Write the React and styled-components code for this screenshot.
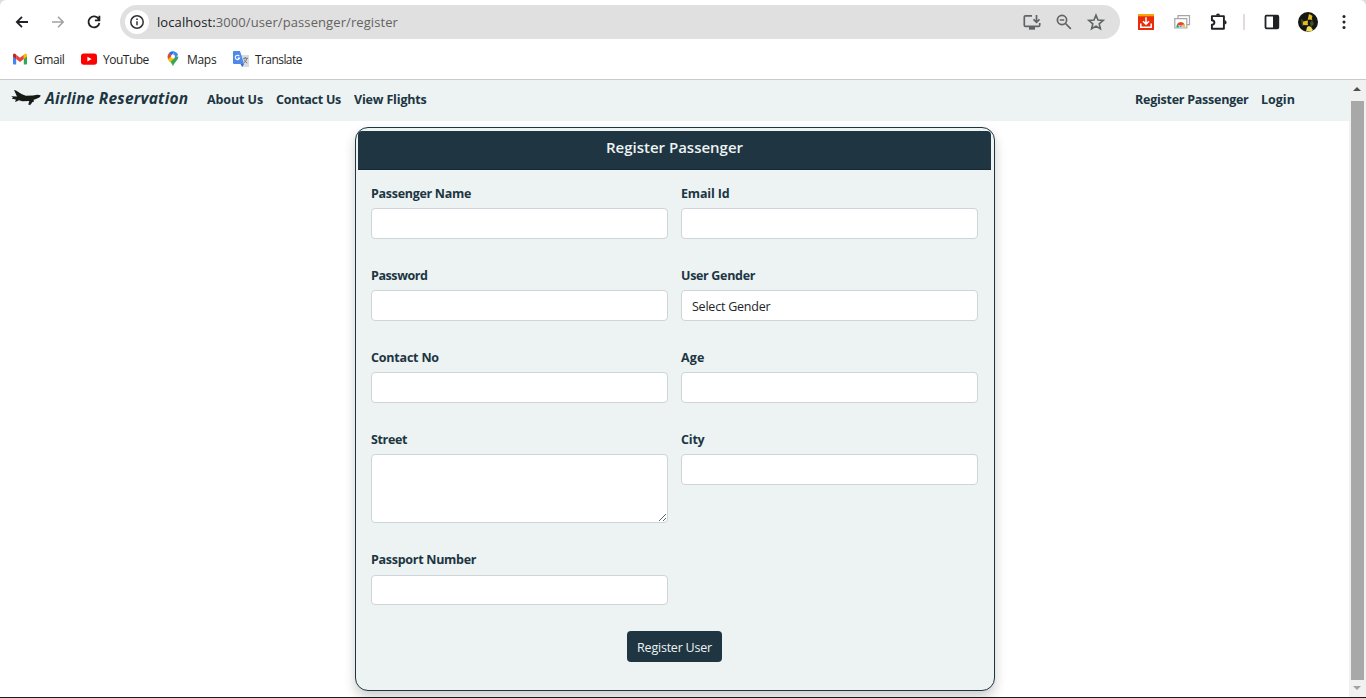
import React from 'react';
import styled, { createGlobalStyle } from 'styled-components';

const navy = '#203542';
const mist = '#ecf3f2';

const GlobalStyle = createGlobalStyle`
  * { box-sizing: border-box; }
  html, body { margin: 0; overflow: hidden; background: #fff; }
  body, input, textarea, button { font-family: "Open Sans", "Noto Sans", sans-serif; }
`;

const Window = styled.div`
  display: flex;
  flex-direction: column;
  width: 1366px;
  height: 698px;
  overflow: hidden;
  background: #e3dada;
  border-bottom: 1px solid #1b1b1b;
`;

const Browser = styled.header`
  height: 80px;
  flex: none;
  background: #fff;
  border-bottom: 1px solid #c8cacc;
  border-radius: 6px 6px 0 0;
`;

const Toolbar = styled.div`
  display: flex;
  align-items: center;
  height: 44px;
  padding: 0 12px;
`;

const NavButtons = styled.div`
  display: flex;
  gap: 16px;
  width: 108px;
`;

const Icon = styled.svg`
  display: block;
  flex: none;
  width: ${p => p.$w || 20}px;
  height: ${p => p.$h || p.$w || 20}px;
  fill: none;
  stroke: ${p => p.$color || 'none'};
  stroke-width: ${p => p.$stroke || 1.8};
`;

const AddressBar = styled.div`
  display: flex;
  align-items: center;
  width: 1000px;
  height: 34px;
  padding: 0 14px 0 5px;
  border-radius: 17px;
  background: #e0e0e0;
`;

const SiteInfo = styled.div`
  display: grid;
  place-items: center;
  width: 24px;
  height: 24px;
  border-radius: 50%;
  background: #fff;
`;

const Url = styled.div`
  flex: 1;
  margin-left: 8px;
  font-size: 13px;
  line-height: 20px;
  letter-spacing: 0.09px;
  color: #636363;
  span { color: #202124; }
`;

const AddressActions = styled.div`
  display: flex;
  align-items: center;
  gap: 12px;
`;

const Extensions = styled.div`
  display: flex;
  align-items: center;
  margin-left: 16px;
  gap: 16px;
`;

const Divider = styled.div`
  width: 2px;
  height: 16px;
  margin: 0 1px 0 -1px;
  background: #e3dada;
`;

const Bookmarks = styled.nav`
  display: flex;
  align-items: center;
  height: 30px;
  padding-left: 12px;
`;

const Bookmark = styled.a`
  display: flex;
  align-items: center;
  gap: 6px;
  width: ${p => p.$width}px;
  font-size: 12px;
  line-height: 16px;
  letter-spacing: ${p => p.$ls || 0}px;
  color: #252525;
  white-space: nowrap;
`;

const BookmarkName = styled.span`
  padding-top: 2px;
`;

const Viewport = styled.div`
  display: flex;
  flex: 1;
  min-height: 0;
  background: #fff;
`;

const Page = styled.div`
  flex: 1;
  min-width: 0;
  overflow: hidden;
`;

const SiteNav = styled.nav`
  display: flex;
  align-items: center;
  height: 41px;
  padding: 0 54px 3px 11px;
  background: ${mist};
`;

const Brand = styled.div`
  display: flex;
  align-items: center;
  gap: 4px;
  width: 196px;
  padding-bottom: 2px;
  font-size: 15.5px;
  font-weight: 700;
  font-style: italic;
  letter-spacing: 0.22px;
  color: ${navy};
  white-space: nowrap;
`;

const NavLink = styled.a`
  width: ${p => p.$width}px;
  margin-left: ${p => (p.$end ? 'auto' : 0)};
  font-size: 12.5px;
  font-weight: 700;
  letter-spacing: ${p => p.$ls || 0}px;
  color: ${navy};
  white-space: nowrap;
`;

const Card = styled.main`
  width: 640px;
  height: 564px;
  margin: 6px 0 0 355px;
  padding: 3px 3px 0 2px;
  border: 1px solid ${navy};
  border-radius: 13px;
  background: ${mist};
  box-shadow: 0 6px 12px rgba(0, 0, 0, 0.2);
`;

const CardTitle = styled.h1`
  height: 39px;
  margin: 0;
  padding-top: 6px;
  border-bottom: 1px solid #182a36;
  border-radius: 4px 4px 0 0;
  background: ${navy};
  color: ${mist};
  font-size: 15px;
  line-height: 21px;
  font-weight: 600;
  text-align: center;
`;

const Form = styled.form`
  display: grid;
  grid-template-columns: 297px 297px;
  grid-template-rows: 82px 82px 82px 120px 76px;
  column-gap: 13px;
  padding: 14px 0 0 13px;
`;

const Field = styled.label`
  display: block;
`;

const Label = styled.span`
  display: block;
  height: ${p => p.$h || 24}px;
  padding-top: 1px;
  font-size: 12.5px;
  line-height: 18px;
  font-weight: 700;
  letter-spacing: ${p => p.$ls || 0}px;
  color: ${navy};
`;

const Input = styled.input`
  display: block;
  width: 100%;
  height: ${p => p.$h || 31}px;
  border: 1px solid #ced4da;
  border-radius: 4px;
  background: #fff;
  outline: 0;
`;

const TextArea = styled.textarea`
  display: block;
  width: 100%;
  height: 69px;
  border: 1px solid #ced4da;
  border-radius: 4px;
  background: #fff;
  resize: vertical;
`;

const Select = styled.div`
  height: 31px;
  padding: 1px 0 0 10px;
  border: 1px solid #ced4da;
  border-radius: 4px;
  background: #fff;
  font-size: 12.5px;
  line-height: 30px;
  letter-spacing: -0.23px;
  color: #212529;
`;

const Submit = styled.button`
  grid-column: 1 / -1;
  display: block;
  width: 95px;
  height: 31px;
  margin: 5px 0 0 256px;
  padding: 1px 0 0;
  border: 0;
  border-radius: 4px;
  background: ${navy};
  color: ${mist};
  font-size: 12.5px;
  letter-spacing: -0.22px;
  white-space: nowrap;
`;

const Scrollbar = styled.div`
  display: flex;
  flex-direction: column;
  align-items: center;
  justify-content: space-between;
  width: 17px;
  padding: 6px 1px 6px 0;
  background: #f1f1f1;
`;

const Thumb = styled.div`
  flex: 1;
  width: 13px;
  margin: 10px 0 6px 1px;
  background: #a8a8a8;
`;

const fields = [
  { name: 'Passenger Name', ls: -0.3 },
  { name: 'Email Id', ls: -0.15 },
  { name: 'Password', ls: -0.42 },
  { name: 'User Gender', ls: -0.32, kind: 'select' },
  { name: 'Contact No', ls: -0.2 },
  { name: 'Age', ls: 0.1 },
  { name: 'Street', ls: -0.35, kind: 'area' },
  { name: 'City', ls: -0.2 },
  { name: 'Passport Number', ls: -0.28, labelHeight: 25, height: 30 },
];

function Control({ kind, height }) {
  if (kind === 'select') return <Select>Select Gender</Select>;
  if (kind === 'area') return <TextArea />;
  return <Input $h={height} />;
}

export default function App() {
  return (
    <>
      <GlobalStyle />
      <Window>
        <Browser>
          <Toolbar>
            <NavButtons>
              <Icon viewBox="0 0 20 20" $color="#202124"><path d="M16 10H5M10 4.8 4.8 10l5.2 5.2" /></Icon>
              <Icon viewBox="0 0 20 20" $color="#a0a2a4" $stroke={1.6}><path d="M4 10h11M10 4.8l5.2 5.2-5.2 5.2" /></Icon>
              <Icon viewBox="0 0 20 20" $color="#202124"><path d="M14.8 7.2A5.5 5.5 0 1 0 15.4 11M15.4 3.8v4.5h-4.5" /></Icon>
            </NavButtons>
            <AddressBar>
              <SiteInfo>
                <Icon viewBox="0 0 16 16" $w={16} $color="#303134" $stroke={1.5}><circle cx="8" cy="8" r="6.2" /><path d="M8 7.2v4M8 4.4v1.6" /></Icon>
              </SiteInfo>
              <Url><span>localhost:</span>3000/user/passenger/register</Url>
              <AddressActions>
                <Icon viewBox="0 0 20 20" $color="#626365" $stroke={1.7}><path d="M10 3.8H3.5Q2.3 3.8 2.3 5v8.2q0 1.2 1.2 1.2h13q1.2 0 1.2-1.2V11M14.5 3v7M11.5 7.3l3 3 3-3" /><path d="M7 16.2h6" strokeWidth="3" /></Icon>
                <Icon viewBox="0 0 20 20" $color="#626365" $stroke={1.7}><circle cx="8" cy="8" r="4.6" /><path d="m11.5 11.5 5.3 5.3M5.8 8h4.4" /></Icon>
                <Icon viewBox="0 0 20 20" $color="#626365" $stroke={1.6}><path d="m10 3.2 2 4.8 5.2.4-4 3.4 1.2 5L10 14.1l-4.4 2.7 1.2-5-4-3.4L8 8z" /></Icon>
              </AddressActions>
            </AddressBar>
            <Extensions>
              <Icon viewBox="0 0 20 20"><path fill="#e92c0b" d="M2 2h16v16H2z" /><path fill="#fca108" d="M2 2h16v2.3H2z" /><path stroke="#fff" strokeWidth="1.5" d="M10 5.3v7M7 9.3l3 3 3-3M4.8 11.5v3.8h10.4v-3.8" /></Icon>
              <Icon viewBox="0 0 20 20">
                <path fill="#fff" stroke="#a6a6a6" strokeWidth="1.2" d="M6 3.6h11.5v9H6z" />
                <path fill="#fff" stroke="#a6a6a6" strokeWidth="1.2" d="M2.8 6.6h12v9.4h-12z" />
                <path fill="#df4434" d="M4.8 12.6a4.3 4.3 0 0 1 8 0L8.8 14z" /><path fill="#22a45b" d="M4.5 15.6q-.3-1.9.7-3.5L8 15.6z" /><path fill="#f6c338" d="M9.6 15.6 10.5 12.4h2.2q.8 1.6.5 3.2z" /><path fill="#4386ee" stroke="#fff" strokeWidth=".5" d="M6.9 15.6a1.9 1.9 0 0 1 3.8 0z" />
              </Icon>
              <Icon viewBox="0 0 20 20" $color="#202124" $stroke={1.9}>
                <path strokeLinejoin="round" d="M3.9 4.1h12v12.6h-12v-3.9q2.5-.3 2.5-2.3T3.9 8.2z" /><path fill="#202124" stroke="none" d="M8 3.5a2 2 0 0 1 4 0zM16.5 8.3a2.1 2.1 0 0 1 0 4.2z" />
              </Icon>
              <Divider />
              <Icon viewBox="0 0 20 20" $color="#202124" $stroke={1.8}><rect x="3.5" y="3.7" width="12.8" height="12.6" rx="1" /><path fill="#202124" stroke="none" d="M11 4h6v12h-6z" /></Icon>
              <Icon viewBox="0 0 20 20">
                <circle cx="10" cy="10" r="10" fill="#151713" /><path fill="#435129" d="m3 7 3 2 1 4-3 1zM14 8l2 4-3 3-1-4z" /><path fill="#e6bc22" d="m11 2 2 1 1.5 1-.7 2 .5 2-3-.4-1.5.5.5-3zM5 10l2-1 3-.5-.3 3 .5 1.5-2.5.2-2.7-.4z" /><path fill="#f0dc62" d="m9 15 2-1 2 1 2 3-2 1.4H8z" />
              </Icon>
              <Icon viewBox="0 0 20 20"><g fill="#202124"><circle cx="10" cy="4.5" r="1.5" /><circle cx="10" cy="10" r="1.5" /><circle cx="10" cy="15.5" r="1.5" /></g></Icon>
            </Extensions>
          </Toolbar>
          <Bookmarks>
            <Bookmark $width={69} $ls={-0.45}>
              <Icon viewBox="0 0 16 16" $w={16}><path fill="#4285f4" d="M1 4.5 4.2 7v6.5H2q-1 0-1-1z" /><path fill="#34a853" d="M11.8 7 15 4.5v8q0 1-1 1h-2.2z" /><path fill="#ea4335" d="M4.2 3.8 8 6.7l3.8-2.9V8L8 11 4.2 8z" /><path fill="#c5221f" d="M1 4.2q0-2.4 2-1.4l1.2 1V8L1 5.6z" /><path fill="#fbbc04" d="M15 4.2q0-2.4-2-1.4l-1.2 1V8L15 5.6z" /></Icon>
              <BookmarkName>Gmail</BookmarkName>
            </Bookmark>
            <Bookmark $width={84} $ls={-0.5}>
              <Icon viewBox="0 0 16 16" $w={16}><rect y="2.4" width="16" height="11.4" rx="2.8" fill="#f00" /><path fill="#fff" d="m6.4 5.7 4.2 2.4-4.2 2.4z" /></Icon>
              <BookmarkName>YouTube</BookmarkName>
            </Bookmark>
            <Bookmark $width={68} $ls={-0.3}>
              <Icon viewBox="0 0 16 16" $w={16}><path fill="#34a853" d="M2.7 6C2.7 10 7 11 8 15.5 9 11 13.3 9.6 13.3 5.4z" /><path fill="#fbbc04" d="M3 7.5 7 3l3 4-5 4.3Q3.4 9.6 3 7.5z" /><path fill="#ea4335" d="m3.9 2.1 3.2 2.7L3 8Q2 4.5 3.9 2.1z" /><path fill="#1a73e8" d="M3.9 2.1Q6-.3 9.6.6L6.4 4.4z" /><path fill="#4285f4" d="M9.6.6q2.6.8 3.5 3.2L9.5 8 8 3z" /><circle cx="8" cy="5.6" r="2" fill="#fff" /></Icon>
              <BookmarkName>Maps</BookmarkName>
            </Bookmark>
            <Bookmark $width={90} $ls={-0.57}>
              <Icon viewBox="0 0 16 16" $w={16}><path fill="#d9dcdf" d="M6 4h10v12H9z" /><path fill="#4f89eb" d="M1 0h6l4 13H1q-1 0-1-1V1q0-1 1-1z" /><path fill="#3367d6" d="M7.5 13H11l-1.8 3z" /><path stroke="#fff" strokeWidth="1.1" d="M6.3 5.1a2.2 2.2 0 1 0 .3 2H4.7" /><path stroke="#69747c" strokeWidth=".9" d="M10 7.3h5M12.3 6v1.3M14 7.3q-.7 3-3.2 4.7M11 8.5q1.4 2.8 3.2 3.6" /></Icon>
              <BookmarkName>Translate</BookmarkName>
            </Bookmark>
          </Bookmarks>
        </Browser>
        <Viewport>
          <Page>
            <SiteNav>
              <Brand>
                <Icon viewBox="0 0 30 18" $w={30} $h={18}><path fill="#161b15" d="M3 1 5 1.6l5.5 3.5 4.3 1.6 7.2-.3q5.2-1.3 7.4-.2 1.2 1.8-5 4l-2.2.8.9.7-.7 1.2-1.6.3.2 1-1.2.6-.5 1.4-2-.6 1-3.6-7.1.2-3.2-1-3.1 1.6-1-.3 1.2-1.7L.7 9.4 2 8.4.2 7.3l5.8.2z" /></Icon>
                Airline Reservation
              </Brand>
              <NavLink $width={69} $ls={-0.1}>About Us</NavLink>
              <NavLink $width={78} $ls={-0.26}>Contact Us</NavLink>
              <NavLink $width={75} $ls={-0.17}>View Flights</NavLink>
              <NavLink $width={126} $end $ls={-0.25}>Register Passenger</NavLink>
              <NavLink $width={34}>Login</NavLink>
            </SiteNav>
            <Card>
              <CardTitle>Register Passenger</CardTitle>
              <Form>
                {fields.map(f => (
                  <Field key={f.name}>
                    <Label $ls={f.ls} $h={f.labelHeight}>{f.name}</Label>
                    <Control kind={f.kind} height={f.height} />
                  </Field>
                ))}
                <Submit type="button">Register User</Submit>
              </Form>
            </Card>
          </Page>
          <Scrollbar>
            <Icon viewBox="0 0 8 5" $w={8} $h={5}><path fill="#505050" d="m0 5 4-4 4 4z" /></Icon>
            <Thumb />
            <Icon viewBox="0 0 8 5" $w={8} $h={5}><path fill="#a3a3a3" d="m0 0 4 4 4-4z" /></Icon>
          </Scrollbar>
        </Viewport>
      </Window>
    </>
  );
}
